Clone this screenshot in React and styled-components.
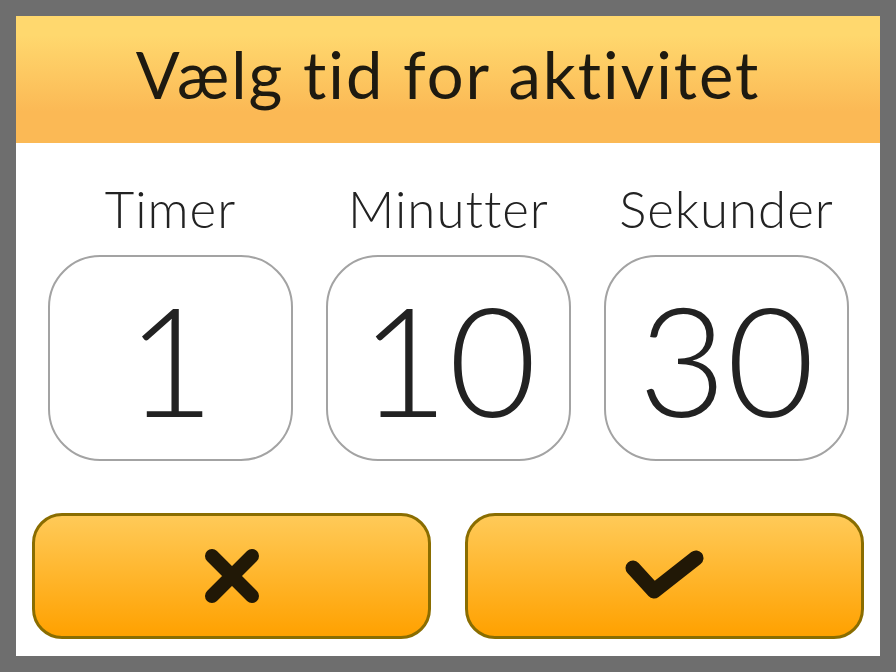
import React from 'react';
import styled, { createGlobalStyle } from 'styled-components';

const GlobalStyle = createGlobalStyle`
    html, body {
        margin: 0;
        padding: 0;
        background: #6e6e6e;
    }
    * {
        box-sizing: border-box;
    }
`;

const Screen = styled.div`
    width: 896px;
    height: 672px;
    padding: 16px;
    background: #6e6e6e;
    font-family: Lato, "Noto Sans", sans-serif;
`;

const Dialog = styled.div`
    width: 864px;
    height: 640px;
    background: #ffffff;
    display: flex;
    flex-direction: column;
`;

const Header = styled.div`
    height: 127px;
    padding-bottom: 12px;
    display: flex;
    align-items: center;
    justify-content: center;
    background: linear-gradient(#ffd86e 15%, #fbb955 75%);
`;

const Title = styled.h1`
    margin: 0;
    font-size: 65px;
    font-weight: 400;
    color: #1e1a10;
    letter-spacing: 2px;
`;

const Columns = styled.div`
    display: grid;
    grid-template-columns: repeat(3, 245px);
    column-gap: 33px;
    padding: 36px 32px 0;
`;

const Field = styled.div`
    display: flex;
    flex-direction: column;
    align-items: center;
`;

const Label = styled.span`
    font-size: 51px;
    font-weight: 300;
    line-height: 60px;
    color: #222;
    letter-spacing: 1px;
`;

const ValueBox = styled.div`
    margin-top: 16px;
    width: 245px;
    height: 206px;
    border: 2px solid #a3a3a3;
    border-radius: 52px;
    display: flex;
    align-items: center;
    justify-content: center;
    font-size: 152px;
    font-weight: 300;
    color: #222;
`;

const Actions = styled.div`
    margin-top: auto;
    display: grid;
    grid-template-columns: 1fr 1fr;
    column-gap: 34px;
    padding: 0 16px 17px;
`;

const ActionButton = styled.button`
    height: 126px;
    border: 3px solid #8a6d00;
    border-radius: 30px;
    background: linear-gradient(#ffca58, #ffa100);
    display: flex;
    align-items: center;
    justify-content: center;
    padding: 0;
    cursor: pointer;
    outline: none;
`;

function CrossIcon() {
    return (
        <svg width="56" height="56" viewBox="0 0 56 56">
            <path d="M8 8 L48 48 M48 8 L8 48" stroke="#211806" strokeWidth="14" strokeLinecap="round" fill="none" />
        </svg>
    );
}

function CheckIcon() {
    return (
        <svg width="82" height="60" viewBox="0 0 82 60">
            <path d="M9 22 L30 45 L72 12" stroke="#211806" strokeWidth="15" strokeLinecap="round" strokeLinejoin="round" fill="none" />
        </svg>
    );
}

const fields = [
    { label: 'Timer', value: 1 },
    { label: 'Minutter', value: 10 },
    { label: 'Sekunder', value: 30 },
];

export default function App() {
    return (
        <>
            <GlobalStyle />
            <Screen>
                <Dialog>
                    <Header>
                        <Title>Vælg tid for aktivitet</Title>
                    </Header>
                    <Columns>
                        {fields.map((f) => (
                            <Field key={f.label}>
                                <Label>{f.label}</Label>
                                <ValueBox>{f.value}</ValueBox>
                            </Field>
                        ))}
                    </Columns>
                    <Actions>
                        <ActionButton aria-label="Annuller"><CrossIcon /></ActionButton>
                        <ActionButton aria-label="OK"><CheckIcon /></ActionButton>
                    </Actions>
                </Dialog>
            </Screen>
        </>
    );
}
